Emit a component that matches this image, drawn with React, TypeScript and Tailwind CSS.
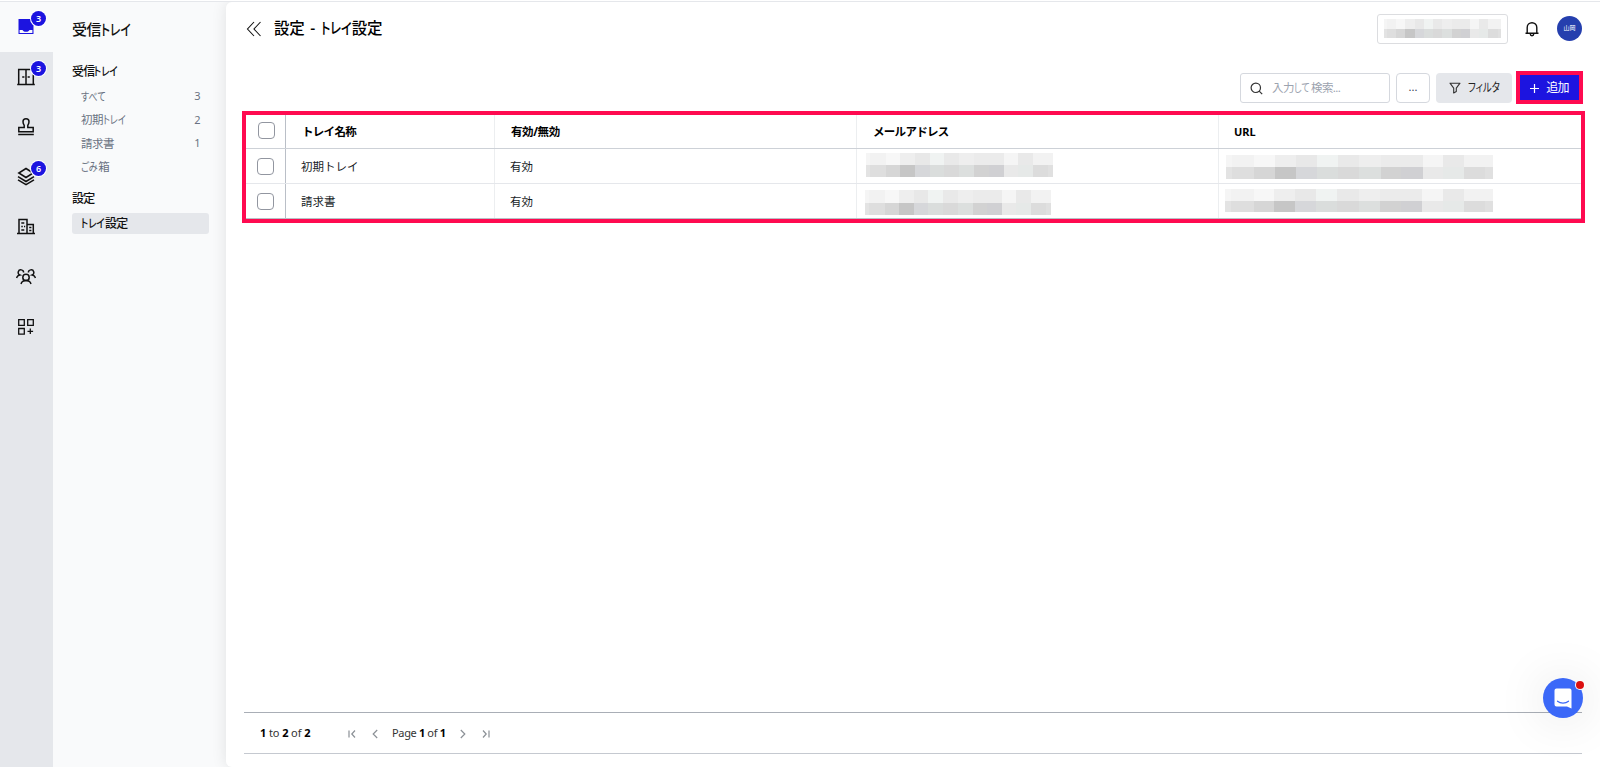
import type { ReactNode } from "react";
import clsx from "clsx";

const ROW_TOP = ["#f5f5f5", "#f2f2f2", "#f7f7f7", "#eeeeee", "#e8e8e8", "#f0f3f2", "#e9e9e9", "#eeeeee", "#ebebeb", "#ebebeb", "#f5f5f5", "#e9e9e9", "#f2f2f2", "#f2f2f2"];
const ROW_BOTTOM = ["#e3e3e3", "#dedede", "#d6d6d6", "#c6c6c6", "#d6d7da", "#dadddc", "#d9d9d9", "#dcdfde", "#d2d2d2", "#d0d0d3", "#e9e9e9", "#e6e9e8", "#dcdcdc", "#e0e0e0"];
const WIDTHS = [19, 66, 61, 64, 62, 63, 64, 64, 61, 64, 61, 63, 64, 23];

// Pixelated placeholder for private values
function Redacted({ className }: { className: string }) {
  return (
    <div className={clsx("flex flex-col", className)}>
      {[ROW_TOP, ROW_BOTTOM].map((colors, row) => (
        <div key={row} className="flex flex-1">
          {colors.map((color, i) => (
            <div key={i} style={{ flexGrow: WIDTHS[i], flexBasis: 0, backgroundColor: color }} />
          ))}
        </div>
      ))}
    </div>
  );
}

// Condenses kana runs, the way UI fonts do, and leaves the kanji at full width
function Label({ text }: { text: string }) {
  return (
    <span className="whitespace-pre">
      {text.split(/([\u3040-\u30ff]+)/).map((part, i) => {
        if (i % 2 === 0) return part;
        const em = /[\u30a0-\u30ff]/.test(part) ? 0.67 : 0.75;
        return (
          <span key={i} className="inline-block origin-left scale-x-[0.78] tracking-normal" style={{ width: `${part.length * em}em` }}>
            {part}
          </span>
        );
      })}
    </span>
  );
}

function RailIcon({ children }: { children: ReactNode }) {
  return (
    <svg width="20" height="20" viewBox="0 0 20 20" fill="none" stroke="#111" strokeWidth="1.5">
      {children}
    </svg>
  );
}

const railItems: { name: string; badge?: number; icon: ReactNode }[] = [
  {
    name: "inbox",
    badge: 3,
    icon: (
      <RailIcon>
        <path d="M2.500 2h15v15h-15z" fill="#1c14e0" stroke="none" />
        <path d="M3.600 12.900h2.800c.9 1.300 2.100 1.900 3.600 1.900s2.700-.6 3.600-1.900h2.800v3H3.600z" fill="#f9fafb" stroke="none" />
      </RailIcon>
    ),
  },
  {
    name: "rooms",
    badge: 3,
    icon: (
      <RailIcon>
        <path d="M2.700 17.500v-15h14.600v15M1.200 17.600h17.600M10 2.500v15M6.200 10h2.200M11.600 10h2.200" />
      </RailIcon>
    ),
  },
  {
    name: "stamp",
    icon: (
      <RailIcon>
        <path d="M2.800 14.800v-4.200h5.400V8.400C7.500 7.300 7 6.200 7 4.800a3 3 0 0 1 6 0c0 1.400-.5 2.500-1.200 3.600v2.200h5.400v4.200zM2.200 17.600h15.600" />
      </RailIcon>
    ),
  },
  {
    name: "documents",
    badge: 6,
    icon: (
      <RailIcon>
        <path d="M10 1.500 17.200 6 10 10.500 2.800 6zM2 9.600l8 4.900 8-4.900M2 12.800l8 4.900 8-4.900" />
      </RailIcon>
    ),
  },
  {
    name: "company",
    icon: (
      <RailIcon>
        <path d="M1 16.500h18M3 16.500v-14h8v14M11 7.500h6.300v9M5.300 6h3M5.300 9.500h1.500M5.300 13h3M8 9.500h1.200M13.200 10.500h2.200M13.200 13.400h2.200" />
      </RailIcon>
    ),
  },
  {
    name: "members",
    icon: (
      <RailIcon>
        <circle cx="10" cy="10.400" r="3.200" />
        <path d="M5 17c.6-2 2.300-3.400 5-3.400s4.400 1.400 5 3.400M7.600 5.600A2.700 2.700 0 1 0 3.800 8C2 8.300 1 9.300.5 11M12.400 5.600A2.700 2.700 0 1 1 16.200 8c1.800.3 2.800 1.300 3.300 3" />
      </RailIcon>
    ),
  },
  {
    name: "apps",
    icon: (
      <RailIcon>
        <path strokeWidth="1.300" d="M2.700 2.700h5.600v5.600H2.700zM11.700 2.700h5.600v5.600h-5.600zM2.700 11.500h5.600v5.600H2.700zM14.300 11.500v5.600M11.500 14.300h5.600" />
      </RailIcon>
    ),
  },
];

function Rail() {
  return (
    <nav className="flex w-[53px] shrink-0 flex-col bg-[#e5e7eb]">
      {railItems.map((item, i) => (
        <div key={item.name} className={clsx("relative flex h-[50px] items-center justify-center pr-[2px]", i === 0 && "bg-[#f9fafb]")}>
          {item.icon}
          {item.badge && (
            <span className="absolute top-[9px] left-[31px] flex h-[15px] w-[15px] items-center justify-center rounded-full bg-[#1c14e0] text-[9px] leading-none font-semibold text-white ring-1 ring-white">
              {item.badge}
            </span>
          )}
        </div>
      ))}
    </nav>
  );
}

const trays = [
  { label: "すべて", count: 3 },
  { label: "初期トレイ", count: 2 },
  { label: "請求書", count: 1 },
  { label: "ごみ箱" },
];

function Sidebar() {
  return (
    <aside className="w-[173px] shrink-0 bg-[#f9fafb] pr-[17px] pl-[19px] text-[#111]">
      <h1 className="mt-[15px] h-6 text-[15px] leading-6 font-medium tracking-[-0.600px]">
        <Label text="受信トレイ" />
      </h1>
      <h2 className="mt-[21px] h-5 text-[12px] leading-5 font-medium tracking-[-0.800px]">
        <Label text="受信トレイ" />
      </h2>
      <ul className="mt-[3px] text-[11.500px] tracking-[-0.500px] text-gray-500">
        {trays.map((tray) => (
          <li key={tray.label} className="flex h-[23.300px] items-center justify-between pr-[9px] pl-[9px]">
            <Label text={tray.label} />
            <span className="text-[11px]">{tray.count}</span>
          </li>
        ))}
      </ul>
      <h2 className="mt-[11px] h-5 text-[12px] leading-5 font-medium tracking-[-0.800px]">設定</h2>
      <div className="mt-1 flex h-[21px] items-center rounded-[3px] bg-[#e5e7eb] pl-[9px] text-[12px] font-medium tracking-[-0.800px]">
        <Label text="トレイ設定" />
      </div>
    </aside>
  );
}

function TopBar() {
  return (
    <header className="flex h-[53px] items-center justify-between pr-[18px] pl-[20px]">
      <div className="flex items-center">
        <svg width="16" height="16" viewBox="0 0 16 16" fill="none" stroke="#111" strokeWidth="1.100">
          <path d="M8 1 1.500 8 8 15M14.500 1 8 8l6.500 7" />
        </svg>
        <h2 className="-mt-px ml-[12px] text-[15.500px] leading-6 font-medium tracking-[-0.300px] text-black [word-spacing:2px]">
          <Label text="設定 - トレイ設定" />
        </h2>
      </div>
      <div className="flex items-center">
        <div className="flex h-[30px] w-[131px] items-center justify-center rounded-[3px] border border-[#dcdde0]">
          <Redacted className="h-[19px] w-[117px]" />
        </div>
        <svg className="ml-[16px]" width="16" height="16" viewBox="0 0 16 16" fill="none" stroke="#111" strokeWidth="1.400">
          <path d="M1.500 12.200h13M3.200 12V6.500a4.800 4.800 0 0 1 9.600 0V12M6.300 13a1.700 1.700 0 0 0 3.400 0" />
        </svg>
        <div className="ml-[17px] flex h-[25px] w-[25px] items-center justify-center rounded-full bg-[#253fae] pb-[2px] text-[6px] leading-none text-white">山岡</div>
      </div>
    </header>
  );
}

function Toolbar() {
  return (
    <div className="mt-[16px] flex h-[33px] items-center justify-end pr-[17px] text-[12px]">
      <div className="flex h-[30px] w-[150px] items-center rounded-[3px] border border-[#d5d8de] pt-px pl-[9px]">
        <svg width="13" height="13" viewBox="0 0 13 13" fill="none" stroke="#333" strokeWidth="1.200">
          <circle cx="5.800" cy="5.800" r="4.700" />
          <path d="m9.200 9.200 3 3" />
        </svg>
        <span className="ml-[9px] text-[11.500px] tracking-[-0.600px] text-[#9ca3af]">
          <Label text="入力して検索..." />
        </span>
      </div>
      <div className="ml-[6px] flex h-[30px] w-[34px] items-center justify-center rounded-[4px] border border-[#d5d8de] text-[11px] text-gray-700">...</div>
      <div className="ml-[6px] flex h-[30px] w-[76px] items-center rounded-[4px] bg-[#e5e7eb] pt-px pl-[13px] text-[#222]">
        <svg width="12" height="12" viewBox="0 0 12 12" fill="none" stroke="#333" strokeWidth="1.100" strokeLinejoin="round">
          <path d="M1 1.200h10L7.300 6.200v3.300l-2.600 1.500V6.200z" />
        </svg>
        <span className="ml-[7px]">
          <Label text="フィルタ" />
        </span>
      </div>
      <div className="ml-[4px] flex h-[33px] w-[67px] items-center justify-center border-4 border-[#ff0a50] bg-[#1c14e0] pt-px text-white">
        <svg width="9" height="9" viewBox="0 0 9 9" stroke="currentColor" strokeWidth="1.200">
          <path d="M4.500 0v9M0 4.500h9" />
        </svg>
        <span className="ml-[7px] text-[12px] tracking-[-0.800px]">追加</span>
      </div>
    </div>
  );
}

function Checkbox() {
  return <span className="block h-[17px] w-[17px] rounded-[4px] border border-[#9296a0] bg-white" />;
}

const rows = [
  {
    name: "初期トレイ",
    status: "有効",
    mail: <Redacted className="mt-[4px] ml-[9px] h-[24px] w-[187px]" />,
    url: <Redacted className="mt-[6px] ml-[7px] h-[24px] w-[267px]" />,
  },
  {
    name: "請求書",
    status: "有効",
    mail: <Redacted className="mt-[6px] ml-[8px] h-[25px] w-[186px]" />,
    url: <Redacted className="mt-[5px] ml-[6px] h-[23px] w-[268px]" />,
  },
];

function TrayTable() {
  return (
    <div className="mt-[7px] ml-[16px] h-[112px] w-[1343px] border-4 border-[#ff0a50] text-[11.500px] text-[#181d1f] [font-feature-settings:normal]">
      <div className="grid h-[34px] grid-cols-[40px_209px_362px_362px_1fr] border-b border-[#cdd1d7] font-bold text-black">
        <div className="flex items-center border-r border-[#babfc7] pl-[12px] pb-[2px]"><Checkbox /></div>
        <div className="flex items-center border-r border-[#eceef0] pt-px pl-[16px] tracking-[-0.700px]">トレイ名称</div>
        <div className="flex items-center border-r border-[#eceef0] pt-px pl-[16px] tracking-[-0.400px]">有効/無効</div>
        <div className="flex items-center border-r border-[#eceef0] pt-px pl-[16px] tracking-[-0.700px]">メールアドレス</div>
        <div className="flex items-center pt-px pl-[15px] text-[11px]">URL</div>
      </div>
      {rows.map((row) => (
        <div key={row.name} className="grid h-[35px] grid-cols-[40px_209px_362px_362px_1fr] border-b border-[#e5e7eb] last:border-[#babfc7]">
          <div className="flex items-center border-r border-[#babfc7] pl-[11px]"><Checkbox /></div>
          <div className="flex items-center border-r border-[#eceef0] pt-px pl-[15px]">{row.name}</div>
          <div className="flex items-center border-r border-[#eceef0] pt-px pl-[15px]">{row.status}</div>
          <div className="border-r border-[#eceef0]">{row.mail}</div>
          <div>{row.url}</div>
        </div>
      ))}
    </div>
  );
}

function Chevron({ d, className }: { d: string; className?: string }) {
  return (
    <svg className={className} width="8" height="10" viewBox="0 0 8 10" fill="none" stroke="#8b9096" strokeWidth="1.200">
      <path d={d} />
    </svg>
  );
}

function Pagination() {
  return (
    <footer className="mt-auto mr-[18px] mb-[13px] ml-[18px] flex h-[42px] items-center border-t border-b border-t-[#a9aeb6] border-b-[#c5c9d0] pt-px pl-[16px] text-[11px] tracking-[-0.100px] text-[#333] [&_b]:text-black">
      <span className="w-[88px] whitespace-nowrap"><b>1</b> to <b>2</b> of <b>2</b></span>
      <Chevron d="M1 1.500v7M7 1.500 3.800 5 7 8.500" />
      <Chevron className="ml-[15px]" d="M6.200 1 2.200 5l4 4" />
      <span className="ml-[13px] w-[54px] whitespace-nowrap tracking-[-0.350px]">Page <b>1</b> of <b>1</b></span>
      <Chevron className="ml-[13px]" d="M1.800 1l4 4-4 4" />
      <Chevron className="ml-[15px]" d="M1 1.500 4.200 5 1 8.500M7 1.500v7" />
    </footer>
  );
}

function ChatLauncher() {
  return (
    <div className="absolute top-[678px] left-[1543px] flex h-10 w-10 items-center justify-center rounded-full bg-[#3b68f8] shadow-[0_2px_50px_rgba(0,0,0,0.130)]">
      <svg className="-mt-px" width="20" height="22" viewBox="0 0 20 22" fill="none">
        <path d="M3.500 1.500h13a2 2 0 0 1 2 2v18l-4.500-2H3.500a2 2 0 0 1-2-2v-14a2 2 0 0 1 2-2z" fill="#fff" />
        <path d="M4.500 14.200c3 2.500 8 2.500 11 0" stroke="#3b68f8" strokeWidth="1.200" strokeLinecap="round" />
      </svg>
      <span className="absolute top-[3px] left-[33px] h-[8px] w-[8px] rounded-full bg-[#dc1010] ring-1 ring-white" />
    </div>
  );
}

export default function App() {
  return (
    <div className="relative flex h-[767px] w-[1600px] flex-col overflow-hidden bg-white font-['Noto_Sans','Noto_Sans_CJK_JP',sans-serif] [font-feature-settings:'palt']">
      <div className="mt-px h-px shrink-0 bg-[#e5e7eb]" />
      <div className="flex min-h-0 flex-1 bg-[#f9fafb]">
        <Rail />
        <Sidebar />
        <main className="flex min-w-0 flex-1 flex-col rounded-l-[6px] bg-white shadow-[0_0_15px_rgba(0,0,0,0.100)] [clip-path:inset(0_0_0_-20px)]">
          <TopBar />
          <Toolbar />
          <TrayTable />
          <Pagination />
        </main>
      </div>
      <ChatLauncher />
    </div>
  );
}
